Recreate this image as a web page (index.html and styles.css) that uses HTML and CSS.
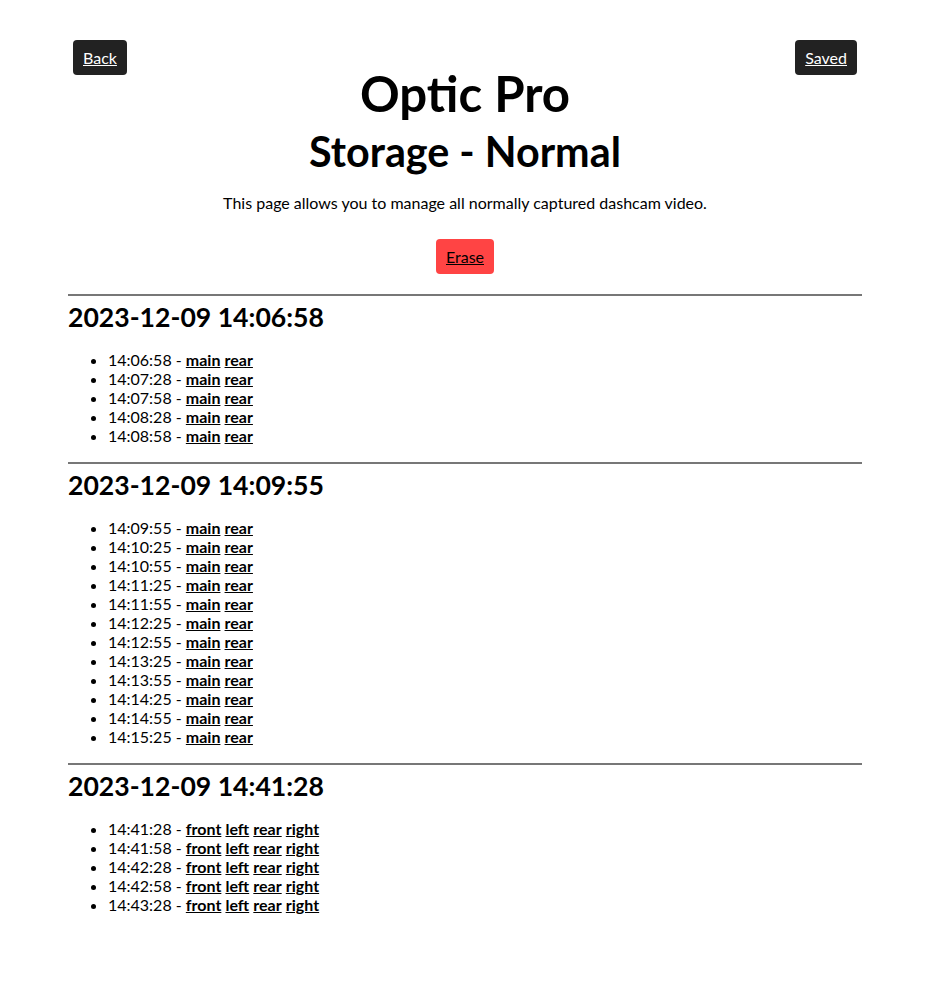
FILE: index.html
```html
<!DOCTYPE html>
<html>
<head>
<meta charset="utf-8">
<title>Optic Pro - Storage</title>
<link rel="stylesheet" href="styles.css">
</head>
<body>
<div class="page">
  <header class="header">
    <a class="btn btn-dark btn-left" href="#">Back</a>
    <div class="titles">
      <h1 class="title">Optic Pro</h1>
      <h2 class="subtitle">Storage - Normal</h2>
    </div>
    <a class="btn btn-dark btn-right" href="#">Saved</a>
  </header>
  <p class="intro">This page allows you to manage all normally captured dashcam video.</p>
  <div class="actions"><a class="btn btn-red" href="#">Erase</a></div>

  <section class="group">
    <h3 class="group-title">2023-12-09 14:06:58</h3>
    <ul class="clips">
      <li>14:06:58 - <a href="#">main</a> <a href="#">rear</a></li>
      <li>14:07:28 - <a href="#">main</a> <a href="#">rear</a></li>
      <li>14:07:58 - <a href="#">main</a> <a href="#">rear</a></li>
      <li>14:08:28 - <a href="#">main</a> <a href="#">rear</a></li>
      <li>14:08:58 - <a href="#">main</a> <a href="#">rear</a></li>
    </ul>
  </section>

  <section class="group">
    <h3 class="group-title">2023-12-09 14:09:55</h3>
    <ul class="clips">
      <li>14:09:55 - <a href="#">main</a> <a href="#">rear</a></li>
      <li>14:10:25 - <a href="#">main</a> <a href="#">rear</a></li>
      <li>14:10:55 - <a href="#">main</a> <a href="#">rear</a></li>
      <li>14:11:25 - <a href="#">main</a> <a href="#">rear</a></li>
      <li>14:11:55 - <a href="#">main</a> <a href="#">rear</a></li>
      <li>14:12:25 - <a href="#">main</a> <a href="#">rear</a></li>
      <li>14:12:55 - <a href="#">main</a> <a href="#">rear</a></li>
      <li>14:13:25 - <a href="#">main</a> <a href="#">rear</a></li>
      <li>14:13:55 - <a href="#">main</a> <a href="#">rear</a></li>
      <li>14:14:25 - <a href="#">main</a> <a href="#">rear</a></li>
      <li>14:14:55 - <a href="#">main</a> <a href="#">rear</a></li>
      <li>14:15:25 - <a href="#">main</a> <a href="#">rear</a></li>
    </ul>
  </section>

  <section class="group">
    <h3 class="group-title">2023-12-09 14:41:28</h3>
    <ul class="clips">
      <li>14:41:28 - <a href="#">front</a> <a href="#">left</a> <a href="#">rear</a> <a href="#">right</a></li>
      <li>14:41:58 - <a href="#">front</a> <a href="#">left</a> <a href="#">rear</a> <a href="#">right</a></li>
      <li>14:42:28 - <a href="#">front</a> <a href="#">left</a> <a href="#">rear</a> <a href="#">right</a></li>
      <li>14:42:58 - <a href="#">front</a> <a href="#">left</a> <a href="#">rear</a> <a href="#">right</a></li>
      <li>14:43:28 - <a href="#">front</a> <a href="#">left</a> <a href="#">rear</a> <a href="#">right</a></li>
    </ul>
  </section>
</div>
</body>
</html>
```

FILE: styles.css
```css
html, body {
  margin: 0;
  padding: 0;
  background: #ffffff;
}

body {
  font-family: Lato, "Open Sans", sans-serif;
  font-size: 16px;
  line-height: 19px;
  color: #000000;
}

.page {
  width: 794px;
  margin-left: 68px;
  padding-top: 40px;
  padding-bottom: 60px;
}

.header {
  display: grid;
  grid-template-columns: 1fr auto 1fr;
  align-items: start;
}

.btn {
  display: inline-block;
  padding: 8px 10px;
  border-radius: 4px;
  text-decoration: underline;
  font-size: 16px;
  line-height: 19px;
}

.btn-dark {
  background: #222222;
  color: #ffffff;
}

.btn-left {
  justify-self: start;
  margin-left: 5px;
}

.btn-right {
  justify-self: end;
  margin-right: 5px;
}

.btn-red {
  background: #ff4444;
  color: #000000;
}

.titles {
  text-align: center;
}

.title {
  margin: 24px 0 0;
  font-size: 49.2px;
  line-height: 58px;
  font-weight: 700;
}

.subtitle {
  margin: 5px 0 0;
  font-size: 41.3px;
  line-height: 48px;
  font-weight: 700;
}

.intro {
  text-align: center;
  margin: 18px 0 0;
}

.actions {
  text-align: center;
  margin-top: 27px;
  padding-bottom: 3px;
}

.group {
  margin-top: 17px;
  border-top: 2px solid #777777;
}

.group-title {
  margin: 4px 0 0;
  font-size: 26.6px;
  line-height: 34px;
  font-weight: 700;
}

.clips {
  margin: 16px 0 0;
  padding-left: 40px;
}

.clips a {
  color: #000000;
  font-weight: 700;
  text-decoration: underline;
}
```
